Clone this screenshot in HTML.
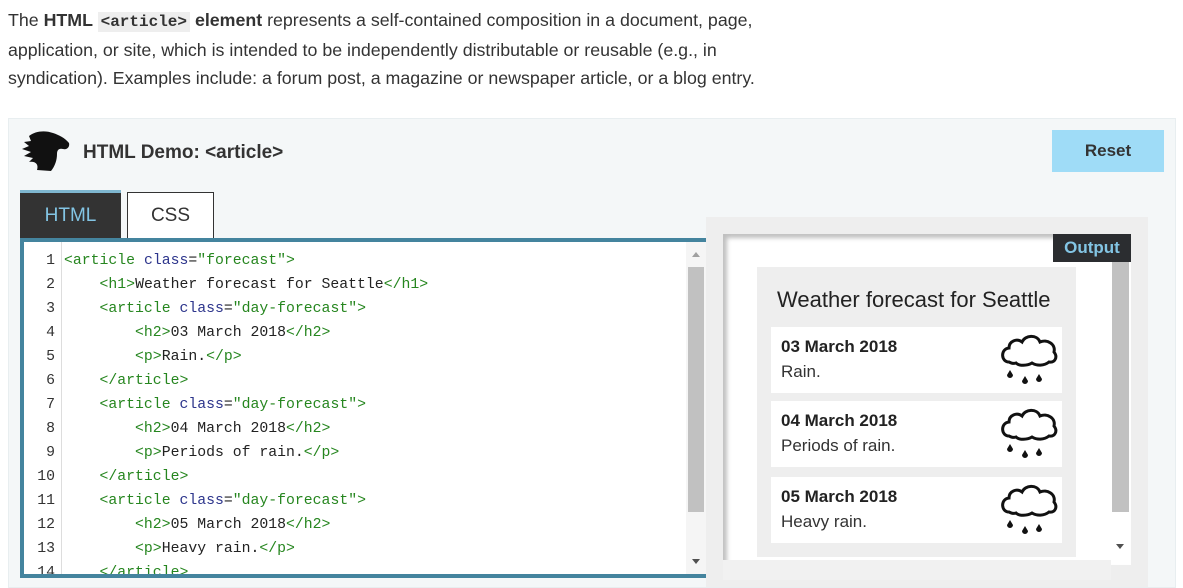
<!DOCTYPE html>
<html><head><meta charset="utf-8"><style>
*{box-sizing:border-box;margin:0;padding:0}
body{width:1183px;height:580px;overflow:hidden;background:#fff;font-family:"Liberation Sans",sans-serif;color:#333;position:relative}
.intro{position:absolute;left:8px;top:6px;font-size:17.8px;line-height:28px;color:#333;width:780px}
.intro code{font-family:"Liberation Mono",monospace;background:#eee;padding:1px 3px;font-weight:bold;font-size:16px}
.demo{position:absolute;left:8px;top:118px;width:1168px;height:470px;background:#f4f7f8;border:1px solid #e8eef0}
.title{position:absolute;left:83px;top:142px;font-size:19px;font-weight:bold;color:#333}
.reset{position:absolute;left:1052px;top:130px;width:112px;height:42px;background:#9fdcf7;font-size:17px;font-weight:bold;text-align:center;line-height:42px;color:#333}
.tab1{position:absolute;left:20px;top:190px;width:101px;height:50px;background:#333;border-top:3px solid #7fb7d0;color:#83c5e4;font-size:19px;text-align:center;line-height:46px}
.tab2{position:absolute;left:127px;top:192px;width:87px;height:48px;background:#fff;border:1px solid #333;border-bottom:none;font-size:19px;text-align:center;line-height:46px;color:#333}
.editor{position:absolute;left:20px;top:238px;width:686px;height:340px;border:4px solid #44849e;border-right:none;background:#fff;overflow:hidden}
.gut{position:absolute;left:3px;top:0;width:35px;height:340px;border-right:1px solid #ddd;background:#fff}
.code{position:absolute;left:0;top:7px;font-family:"Liberation Mono",monospace;font-size:14.8px;line-height:24px;color:#222}
.code div{height:24px;white-space:pre}
.ln{display:inline-block;width:31px;text-align:right;color:#333;margin-right:9px}
.t{color:#26861f}.a{color:#2d358c}.s{color:#26861f}
.vs{position:absolute;left:662px;top:0;width:20px;height:340px;background:#f5f5f5}
.out{position:absolute;left:706px;top:217px;width:442px;height:370px;background:#eee}
.frame{position:absolute;left:723px;top:234px;width:408px;height:331px;background:#fff;box-shadow:inset 4px 4px 4px rgba(0,0,0,.25)}
.olabel{position:absolute;left:1053px;top:234px;width:78px;height:28px;background:#2b2d30;color:#83c5e4;font-weight:bold;font-size:17px;text-align:center;line-height:28px}
.card{position:absolute;left:757px;top:267px;width:319px;height:290px;background:#eee}
.card h1{position:absolute;left:20px;top:20px;font-size:22px;font-weight:normal;color:#222;white-space:nowrap}
.day{position:absolute;left:14px;width:291px;height:66px;background:#fff}
.day b{position:absolute;left:10px;top:10px;font-size:17px;font-weight:bold;color:#222}
.day span{position:absolute;left:10px;top:35px;font-size:17px;color:#333}
.day svg{position:absolute;left:227px;top:5px}
</style></head><body>
<div class="intro">The <b>HTML <code>&lt;article&gt;</code> element</b> represents a self-contained composition in a document, page, application, or site, which is intended to be independently distributable or reusable (e.g., in syndication). Examples include: a forum post, a magazine or newspaper article, or a blog entry.</div>
<div class="demo"></div>
<svg style="position:absolute;left:21px;top:130px" width="50" height="42" viewBox="0 0 50 42"><path d="M8 6 C14 1 24 0 32 3 C38 5 44 8 48 13 C49 17 46 20 42 19 C38 18 36 20 36 24 C36 30 34 36 30 41 L16 40 C18 34 14 31 8 32 L12 28 L3 26 L10 22 L1 19 L8 16 L3 12 L10 11 Z" fill="#111"/></svg>
<div class="title">HTML Demo: &lt;article&gt;</div>
<div class="reset">Reset</div>
<div class="tab1">HTML</div>
<div class="tab2">CSS</div>
<div class="editor">
<div class="gut"></div>
<div class="code">
<div><span class="ln">1</span><span class="t">&lt;article</span> <span class="a">class</span>=<span class="s">"forecast"</span><span class="t">&gt;</span></div>
<div><span class="ln">2</span>    <span class="t">&lt;h1&gt;</span>Weather forecast for Seattle<span class="t">&lt;/h1&gt;</span></div>
<div><span class="ln">3</span>    <span class="t">&lt;article</span> <span class="a">class</span>=<span class="s">"day-forecast"</span><span class="t">&gt;</span></div>
<div><span class="ln">4</span>        <span class="t">&lt;h2&gt;</span>03 March 2018<span class="t">&lt;/h2&gt;</span></div>
<div><span class="ln">5</span>        <span class="t">&lt;p&gt;</span>Rain.<span class="t">&lt;/p&gt;</span></div>
<div><span class="ln">6</span>    <span class="t">&lt;/article&gt;</span></div>
<div><span class="ln">7</span>    <span class="t">&lt;article</span> <span class="a">class</span>=<span class="s">"day-forecast"</span><span class="t">&gt;</span></div>
<div><span class="ln">8</span>        <span class="t">&lt;h2&gt;</span>04 March 2018<span class="t">&lt;/h2&gt;</span></div>
<div><span class="ln">9</span>        <span class="t">&lt;p&gt;</span>Periods of rain.<span class="t">&lt;/p&gt;</span></div>
<div><span class="ln">10</span>    <span class="t">&lt;/article&gt;</span></div>
<div><span class="ln">11</span>    <span class="t">&lt;article</span> <span class="a">class</span>=<span class="s">"day-forecast"</span><span class="t">&gt;</span></div>
<div><span class="ln">12</span>        <span class="t">&lt;h2&gt;</span>05 March 2018<span class="t">&lt;/h2&gt;</span></div>
<div><span class="ln">13</span>        <span class="t">&lt;p&gt;</span>Heavy rain.<span class="t">&lt;/p&gt;</span></div>
<div><span class="ln">14</span>    <span class="t">&lt;/article&gt;</span></div>
</div>
<div class="vs"><div style="position:absolute;left:2px;top:25px;width:16px;height:245px;background:#c1c1c1"></div>
<div style="position:absolute;left:6px;top:10px;border:4px solid transparent;border-bottom:5px solid #a0a0a0;border-top:none"></div>
<div style="position:absolute;left:6px;top:317px;border:4px solid transparent;border-top:5px solid #505050;border-bottom:none"></div></div>
</div>
<div class="out"></div>
<div class="frame"></div>
<div style="position:absolute;left:1112px;top:262px;width:17px;height:250px;background:#c1c1c1"></div>
<div style="position:absolute;left:1116px;top:544px;border:4px solid transparent;border-top:5px solid #505050;border-bottom:none"></div>
<div style="position:absolute;left:723px;top:560px;width:388px;height:20px;background:#f1f1f1"></div>
<div class="olabel">Output</div>
<div class="card">
<h1>Weather forecast for Seattle</h1>
<div class="day" style="top:60px"><b>03 March 2018</b><span>Rain.</span>CLOUD</div>
<div class="day" style="top:134px"><b>04 March 2018</b><span>Periods of rain.</span>CLOUD</div>
<div class="day" style="top:210px"><b>05 March 2018</b><span>Heavy rain.</span>CLOUD</div>
</div>
<script>
var c='<svg width="60" height="58" viewBox="0 0 60 58"><path d="M11 30 C3 30 2 17 11 16 C11 9 19 6 24 10 C27 3 39 2 42 10 C49 7 58 12 56 20 C60 25 57 31 51 30 C46 34 39 34 34 31 C29 34 21 34 18 31 C15 32 13 31 11 30 Z" fill="none" stroke="#111" stroke-width="3"/><path d="M12 38 l-3 5 a3 3 0 0 0 6 0 z M27 44 l-3 5 a3 3 0 0 0 6 0 z M41 42 l-3 5 a3 3 0 0 0 6 0 z" fill="#111"/></svg>';
document.querySelectorAll('.day').forEach(function(d){d.innerHTML=d.innerHTML.replace('CLOUD',c)});
</script>
</body></html>
